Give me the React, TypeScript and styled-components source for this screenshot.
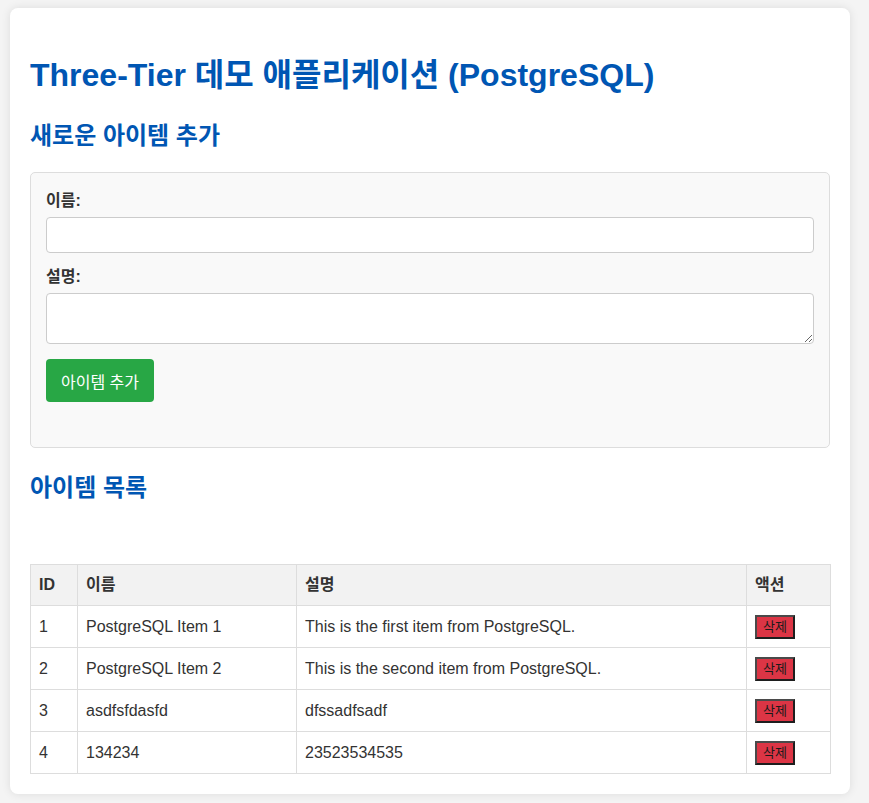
import React from "react";
import styled, { createGlobalStyle } from "styled-components";

const GlobalStyle = createGlobalStyle`
  html, body { margin: 0; padding: 0; }
  body {
    background: #f4f4f4;
    font-family: "Liberation Sans", Arial, "Noto Sans CJK KR", sans-serif;
    color: #333;
  }
`;

const Page = styled.div`
  padding: 8px 19px 9px 10px;
`;

const Container = styled.div`
  width: 800px;
  padding: 20px;
  background: #fff;
  border-radius: 8px;
  box-shadow: 0 0 10px rgba(0, 0, 0, 0.1);
`;

const Title = styled.h1`
  margin: 27px 0 26px;
  font-size: 32px;
  line-height: 40px;
  font-weight: bold;
  color: #0056b3;
`;

const SectionTitle = styled.h2<{ $top?: number }>`
  margin: ${(p) => p.$top ?? 0}px 0 21px;
  font-size: 24px;
  line-height: 30px;
  font-weight: bold;
  color: #0056b3;
`;

const FormBox = styled.form`
  background: #f9f9f9;
  border: 1px solid #ddd;
  border-radius: 5px;
  padding: 18px 15px 15px;
`;

const Group = styled.div<{ $gap: number }>`
  margin-bottom: ${(p) => p.$gap}px;
`;

const Label = styled.label`
  display: block;
  font-size: 16px;
  line-height: 20px;
  font-weight: bold;
  color: #333;
  margin-bottom: 6px;
`;

const TextInput = styled.input`
  display: block;
  box-sizing: border-box;
  width: 100%;
  height: 36px;
  border: 1px solid #ccc;
  border-radius: 4px;
  background: #fff;
  padding: 8px;
  font-size: 15px;
  font-family: inherit;
`;

const TextArea = styled.textarea`
  display: block;
  box-sizing: border-box;
  width: 100%;
  height: 51px;
  border: 1px solid #ccc;
  border-radius: 4px;
  background: #fff;
  padding: 8px;
  font-size: 15px;
  font-family: inherit;
`;

const AddButton = styled.button`
  display: block;
  box-sizing: border-box;
  height: 43px;
  padding: 0 15px;
  border: none;
  border-radius: 4px;
  background: #28a745;
  color: #fff;
  font-size: 16px;
  font-family: "Liberation Sans", Arial, "Noto Sans CJK KR", sans-serif;
  cursor: pointer;
`;

const Table = styled.table`
  width: 800px;
  margin-top: 61px;
  border-collapse: collapse;
  table-layout: fixed;
`;

const Th = styled.th`
  border: 1px solid #ddd;
  background: #f2f2f2;
  padding: 8px;
  text-align: left;
  font-size: 16px;
  line-height: 24px;
  font-weight: bold;
  color: #333;
`;

const Td = styled.td`
  border: 1px solid #ddd;
  padding: 8px;
  text-align: left;
  font-size: 16px;
  line-height: 25px;
  color: #333;
  white-space: nowrap;
`;

const DeleteButton = styled.button`
  box-sizing: border-box;
  display: inline-block;
  height: 24px;
  margin-top: 1px;
  padding: 0 6px;
  vertical-align: top;
  background: #dc3545;
  color: #1a1a1a;
  border: 2px solid;
  border-color: #4a4a4a #1e1e1e #1e1e1e #4a4a4a;
  font-size: 13px;
  line-height: 18px;
  font-family: "Liberation Sans", Arial, "Noto Sans CJK KR", sans-serif;
  cursor: pointer;
`;

const items = [
  { id: 1, name: "PostgreSQL Item 1", desc: "This is the first item from PostgreSQL." },
  { id: 2, name: "PostgreSQL Item 2", desc: "This is the second item from PostgreSQL." },
  { id: 3, name: "asdfsfdasfd", desc: "dfssadfsadf" },
  { id: 4, name: "134234", desc: "23523534535" },
];

export default function App() {
  return (
    <>
      <GlobalStyle />
      <Page>
        <Container>
          <Title>Three-Tier 데모 애플리케이션 (PostgreSQL)</Title>
          <SectionTitle>새로운 아이템 추가</SectionTitle>
          <FormBox onSubmit={(e) => e.preventDefault()}>
            <Group $gap={14}>
              <Label htmlFor="name">이름:</Label>
              <TextInput id="name" type="text" />
            </Group>
            <Group $gap={15}>
              <Label htmlFor="desc">설명:</Label>
              <TextArea id="desc" />
            </Group>
            <Group $gap={30}>
              <AddButton type="submit">아이템 추가</AddButton>
            </Group>
          </FormBox>
          <SectionTitle $top={25}>아이템 목록</SectionTitle>
          <Table>
            <colgroup>
              <col style={{ width: 47 }} />
              <col style={{ width: 219 }} />
              <col style={{ width: 450 }} />
              <col style={{ width: 84 }} />
            </colgroup>
            <thead>
              <tr>
                <Th>ID</Th>
                <Th>이름</Th>
                <Th>설명</Th>
                <Th>액션</Th>
              </tr>
            </thead>
            <tbody>
              {items.map((it) => (
                <tr key={it.id}>
                  <Td>{it.id}</Td>
                  <Td>{it.name}</Td>
                  <Td>{it.desc}</Td>
                  <Td>
                    <DeleteButton>삭제</DeleteButton>
                  </Td>
                </tr>
              ))}
            </tbody>
          </Table>
        </Container>
      </Page>
    </>
  );
}
